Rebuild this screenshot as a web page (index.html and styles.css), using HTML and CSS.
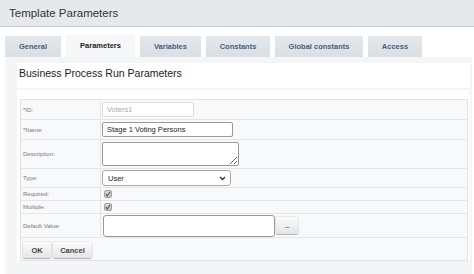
FILE: index.html
```html
<!doctype html>
<html lang="en">
<head>
    <meta charset="utf-8">
    <title>Template Parameters</title>
    <link rel="stylesheet" href="styles.css">
</head>
<body>
    <div class="header"><h1>Template Parameters</h1></div>

    <div class="tabs">
        <span class="tab t-general">General</span>
        <span class="tab t-params active">Parameters</span>
        <span class="tab t-vars">Variables</span>
        <span class="tab t-consts">Constants</span>
        <span class="tab t-global">Global constants</span>
        <span class="tab t-access">Access</span>
    </div>

    <div class="tab-body">
        <div class="caption">Business Process Run Parameters</div>
        <div class="sheet">
            <div class="params">
                <div class="row r-id">
                    <div class="label">*ID:</div>
                    <div class="value"><input class="field f-id" type="text" value="Voters1" disabled></div>
                </div>
                <div class="row r-name">
                    <div class="label">*Name:</div>
                    <div class="value"><input class="field f-name" type="text" value="Stage 1 Voting Persons"></div>
                </div>
                <div class="row r-desc">
                    <div class="label">Description:</div>
                    <div class="value"><textarea class="field f-desc"></textarea></div>
                </div>
                <div class="row r-type">
                    <div class="label">Type:</div>
                    <div class="value">
                        <div class="select">
                            <span>User</span>
                            <svg width="7" height="5" viewBox="0 0 7 5"><path d="M1 1l2.5 2.5L6 1" fill="none" stroke="#333" stroke-width="1.4"/></svg>
                        </div>
                    </div>
                </div>
                <div class="row r-check">
                    <div class="label">Required:</div>
                    <div class="value"><span class="check"><svg width="6" height="6" viewBox="0 0 6 6"><path d="M0.8 3.2l1.5 1.6L5.2 0.8" fill="none" stroke="#555" stroke-width="1.1"/></svg></span></div>
                </div>
                <div class="row r-check">
                    <div class="label">Multiple:</div>
                    <div class="value"><span class="check"><svg width="6" height="6" viewBox="0 0 6 6"><path d="M0.8 3.2l1.5 1.6L5.2 0.8" fill="none" stroke="#555" stroke-width="1.1"/></svg></span></div>
                </div>
                <div class="row r-default">
                    <div class="label">Default Value:</div>
                    <div class="value">
                        <input class="field f-default" type="text" value="">
                        <span class="btn btn-dots">...</span>
                    </div>
                </div>
                <div class="row r-buttons">
                    <span class="btn btn-ok">OK</span>
                    <span class="btn btn-cancel">Cancel</span>
                </div>
            </div>
        </div>
    </div>
</body>
</html>
```

FILE: styles.css
```css
body {
    margin: 0;
    background: #fff;
    font-family: "Liberation Sans", Arial, Helvetica, sans-serif;
    color: #333;
}

.header {
    height: 26px;
    background: #e5e9ec;
    border-bottom: 1px solid #c9ced1;
}
.header h1 {
    margin: 0;
    padding-left: 9px;
    font-size: 11.5px;
    font-weight: normal;
    line-height: 26px;
    color: #333;
}

.tabs {
    display: flex;
    align-items: flex-end;
    gap: 5px;
    margin-top: 8px;
    padding-left: 5px;
    height: 22px;
}
.tab {
    height: 21px;
    line-height: 21px;
    text-align: center;
    font-size: 7.5px;
    font-weight: bold;
    color: #4a5c80;
    background: linear-gradient(#e3e8eb, #d9dfe3);
}
.tab.active {
    height: 22px;
    color: #222;
    background: #f5f7f8;
}
.t-general { width: 56px; }
.t-params { width: 69px; }
.t-vars { width: 61px; }
.t-consts { width: 64px; }
.t-global { width: 88px; }
.t-access { width: 54px; }

.tab-body {
    margin: 0 2px 0 5px;
    padding: 6px 0 20px 12px;
    background: #f3f5f6;
}
.caption {
    height: 25px;
    margin-right: 2px;
    padding-left: 2px;
    font-size: 10.5px;
    line-height: 21px;
    color: #222;
    background: #fff;
}
.sheet {
    margin: 2px 2px 0 0;
    padding: 9px 2px 0 3px;
    background: #fff;
}

.params {
    border: 1px solid #dfe3e6;
    background: #f8f9fa;
}
.row {
    display: flex;
    box-sizing: border-box;
    border-bottom: 1px solid #e2e6e8;
}
.row.r-id, .row.r-name { height: 20px; }
.row.r-desc { height: 29px; }
.row.r-type { height: 19px; }
.row.r-check { height: 13px; }
.row.r-default { height: 24px; }
.row.r-buttons {
    height: 22px;
    border-bottom: 0;
    align-items: center;
    gap: 2px;
    padding-left: 2px;
}

.label {
    box-sizing: border-box;
    width: 80px;
    border-right: 1px solid #e2e6e8;
    display: flex;
    align-items: center;
    padding-left: 2px;
    font-size: 6px;
    color: #777;
}
.value {
    display: flex;
    align-items: center;
    gap: 1px;
    padding-left: 1px;
}

.field {
    box-sizing: border-box;
    margin: 0;
    padding: 0 4px;
    font-family: inherit;
    font-size: 7.5px;
    color: #222;
    background: #fff;
    border: 1px solid #999;
    border-radius: 2px;
    outline: none;
}
.f-id {
    width: 92px; height: 15px;
    color: #aaa;
    border-color: #dcdcdc;
}
.f-name { width: 131px; height: 15px; }
.f-desc {
    width: 137px; height: 24px;
    margin-top: -1px;
    resize: both;
}
.f-default { width: 172px; height: 22px; margin-left: 1px; border-radius: 3px; }

.select {
    box-sizing: border-box;
    width: 129px; height: 16px;
    display: flex;
    align-items: center;
    justify-content: space-between;
    padding: 0 4px 0 5px;
    font-size: 7.5px;
    color: #222;
    background: #fff;
    border: 1px solid #aaa;
    border-radius: 3px;
}
.select svg { display: block; }

.check {
    box-sizing: border-box;
    width: 8px; height: 8px;
    margin-left: 2px;
    display: flex;
    align-items: center;
    justify-content: center;
    border: 1px solid #a0a0a0;
    border-radius: 2px;
    background: linear-gradient(#dadada, #c2c2c2);
}
.check svg { display: block; }

.btn {
    box-sizing: border-box;
    height: 16px;
    display: inline-flex;
    align-items: center;
    justify-content: center;
    font-size: 7.5px;
    font-weight: bold;
    color: #444;
    background: linear-gradient(#fbfbfb, #e3e5e7);
    border-radius: 2px;
    box-shadow: 0 1px 1px rgba(0, 0, 0, 0.25), 0 0 0 1px rgba(0, 0, 0, 0.06);
}
.btn-ok { width: 28px; margin-top: 2px; }
.btn-cancel { width: 39px; margin-top: 2px; }
.btn-dots {
    width: 22px; height: 17px;
    font-size: 7px;
    color: #777;
    letter-spacing: -0.5px;
}
```
